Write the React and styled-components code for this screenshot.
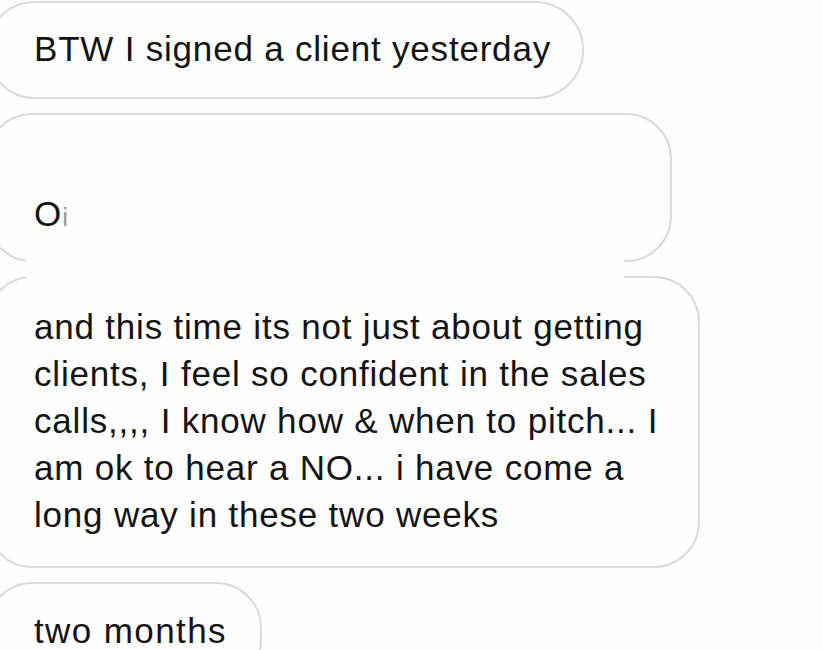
import React from "react"
import styled, { createGlobalStyle } from "styled-components"

const GlobalStyle = createGlobalStyle`
  html, body {
    margin: 0;
    padding: 0;
    background: #fdfdfd;
  }
`

const Page = styled.div`
  width: 822px;
  height: 650px;
  overflow: hidden;
  background: #fdfdfd;
  font-family: "Liberation Sans", Arial, sans-serif;
  color: #141414;
`

const Thread = styled.div`
  position: relative;
  display: flex;
  flex-direction: column;
  align-items: flex-start;
  gap: 14px;
  margin-left: -14px;
  padding-top: 1px;
`

const Bubble = styled.div`
  box-sizing: border-box;
  width: ${({ w }) => w}px;
  padding: ${({ pt }) => pt}px 6px ${({ pb }) => pb}px 46px;
  border: 2px solid #dadada;
  border-radius: ${({ r }) => r || 46}px;
  background: #fefefe;
  font-size: 35px;
  line-height: 47px;
  letter-spacing: ${({ tracking }) => tracking}px;
  white-space: nowrap;
`

const Faded = styled.span`
  color: #9a9a9a;
  font-size: 26px;
`

// the screenshot has the seam between two bubbles wiped out
const Seam = styled.div`
  position: absolute;
  left: 40px;
  top: 254px;
  width: 598px;
  height: 24px;
  background: #fdfdfd;
`

const App = () => (
  <Page>
    <GlobalStyle />
    <Thread>
      <Bubble w={598} pt={22} pb={25} r={50} tracking={0.8}>
        BTW I signed a client yesterday
      </Bubble>
      <Bubble w={686} pt={75} pb={19} tracking={1}>
        O<Faded>i</Faded>
      </Bubble>
      <Bubble w={714} pt={25} pb={28} tracking={0.8}>
        and this time its not just about getting
        <br />
        clients, I feel so confident in the sales
        <br />
        calls,,,, I know how &amp; when to pitch... I
        <br />
        am ok to hear a NO... i have come a
        <br />
        long way in these two weeks
      </Bubble>
      <Bubble w={276} pt={23} pb={31} tracking={1.4}>
        two months
      </Bubble>
      <Seam />
    </Thread>
  </Page>
)

export default App
